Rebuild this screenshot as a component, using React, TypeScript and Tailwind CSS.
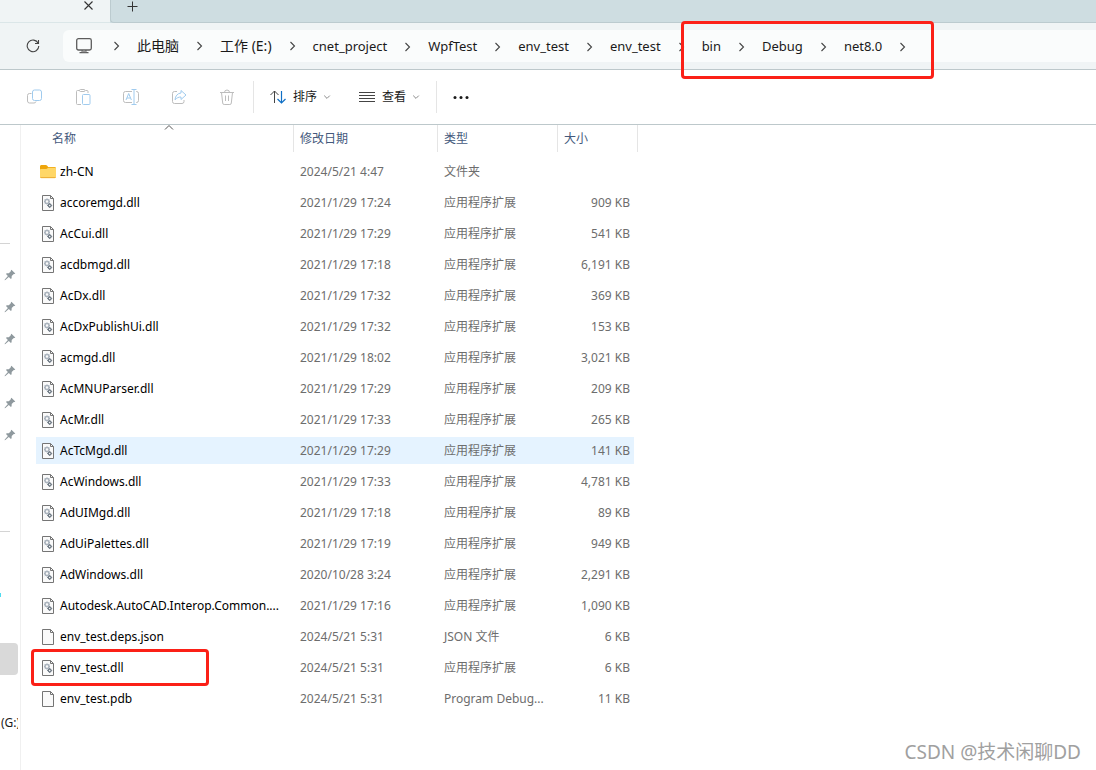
import type { ReactNode } from "react";

type FileKind = "folder" | "dll" | "plain";

interface FileRow {
  name: string;
  date: string;
  type: string;
  size: string;
  kind: FileKind;
}

const DLL = "应用程序扩展";

const files: FileRow[] = [
  { name: "zh-CN", date: "2024/5/21 4:47", type: "文件夹", size: "", kind: "folder" },
  { name: "accoremgd.dll", date: "2021/1/29 17:24", type: DLL, size: "909 KB", kind: "dll" },
  { name: "AcCui.dll", date: "2021/1/29 17:29", type: DLL, size: "541 KB", kind: "dll" },
  { name: "acdbmgd.dll", date: "2021/1/29 17:18", type: DLL, size: "6,191 KB", kind: "dll" },
  { name: "AcDx.dll", date: "2021/1/29 17:32", type: DLL, size: "369 KB", kind: "dll" },
  { name: "AcDxPublishUi.dll", date: "2021/1/29 17:32", type: DLL, size: "153 KB", kind: "dll" },
  { name: "acmgd.dll", date: "2021/1/29 18:02", type: DLL, size: "3,021 KB", kind: "dll" },
  { name: "AcMNUParser.dll", date: "2021/1/29 17:29", type: DLL, size: "209 KB", kind: "dll" },
  { name: "AcMr.dll", date: "2021/1/29 17:33", type: DLL, size: "265 KB", kind: "dll" },
  { name: "AcTcMgd.dll", date: "2021/1/29 17:29", type: DLL, size: "141 KB", kind: "dll" },
  { name: "AcWindows.dll", date: "2021/1/29 17:33", type: DLL, size: "4,781 KB", kind: "dll" },
  { name: "AdUIMgd.dll", date: "2021/1/29 17:18", type: DLL, size: "89 KB", kind: "dll" },
  { name: "AdUiPalettes.dll", date: "2021/1/29 17:19", type: DLL, size: "949 KB", kind: "dll" },
  { name: "AdWindows.dll", date: "2020/10/28 3:24", type: DLL, size: "2,291 KB", kind: "dll" },
  { name: "Autodesk.AutoCAD.Interop.Common....", date: "2021/1/29 17:16", type: DLL, size: "1,090 KB", kind: "dll" },
  { name: "env_test.deps.json", date: "2024/5/21 5:31", type: "JSON 文件", size: "6 KB", kind: "plain" },
  { name: "env_test.dll", date: "2024/5/21 5:31", type: DLL, size: "6 KB", kind: "dll" },
  { name: "env_test.pdb", date: "2024/5/21 5:31", type: "Program Debug...", size: "11 KB", kind: "plain" },
];

const HOVERED = "AcTcMgd.dll";

const crumbs = [
  { label: "此电脑", cjk: true },
  { label: "工作 (E:)", cjk: true },
  { label: "cnet_project" },
  { label: "WpfTest" },
  { label: "env_test" },
  { label: "env_test" },
  { label: "bin" },
  { label: "Debug" },
  { label: "net8.0" },
];

function Chevron() {
  return (
    <svg className="mx-4 h-2.5 w-[9px] shrink-0" viewBox="0 0 9 10" fill="none" stroke="#444" strokeWidth="1.1">
      <path d="M2.500 1 6.500 5l-4 4" />
    </svg>
  );
}

function SmallDown() {
  return (
    <svg className="h-2 w-2" viewBox="0 0 8 8" fill="none" stroke="#8a8a8a">
      <path d="M1.2 2.6 4 5.4l2.8-2.8" />
    </svg>
  );
}

function FileIcon({ kind }: { kind: FileKind }) {
  if (kind === "folder") {
    return (
      <svg className="h-4 w-4 shrink-0" viewBox="0 0 16 16">
        <path d="M0 2.700C0 1.800.6 1.100 1.500 1.100h4.300c.5 0 .9.2 1.200.500l1.200 1.300h6.400c.8 0 1.400.6 1.400 1.400V7H0z" fill="#eea50b" />
        <path d="M0 6c0-.6.4-1 1-1h5.200c.4 0 .7-.1 1-.4l.6-.6c.2-.2.500-.3.8-.3H15c.6 0 1 .4 1 1v8.300c0 .6-.6 1.200-1.200 1.200H1.200C.6 14.200 0 13.600 0 13z" fill="#ffd767" />
        <path d="M.2 13.200h15.600c-.2.500-.6.900-1.200.900H1.400c-.6 0-1-.4-1.200-.900z" fill="#eaa52a" />
      </svg>
    );
  }
  return (
    <svg className="h-4 w-4 shrink-0" viewBox="0 0 16 16" fill="none">
      <path d="M2.500.500h8l3 3v12h-11z" fill="#fafafa" stroke="#757575" />
      <path d="M10.500.500v3h3" stroke="#757575" />
      {kind === "dll" && (
        <>
          <circle cx="7" cy="6.500" r="2" stroke="#a9b2bc" strokeWidth="1.500" />
          <path d="M7 3.500v1M7 8.500v1M4 6.500h1M9 6.500h1M4.800 4.300l.7.700M9.200 4.300l-.7.700M4.800 8.700l.7-.7" stroke="#a9b2bc" />
          <circle cx="9.700" cy="10.500" r="1.400" stroke="#707b86" strokeWidth="1.300" />
          <path d="M9.700 8v1M9.700 12v1M7.200 10.500h1M11.200 10.500h1" stroke="#707b86" />
        </>
      )}
    </svg>
  );
}

function Pin() {
  return (
    <svg className="h-3 w-3" viewBox="0 0 12 12" fill="#8f999e">
      <path d="M7.400.700 11.300 4.400 10.500 5.100 9.800 5 7.700 7.100 7.600 9.200 6.900 9.900 4.800 7.900 1.400 11 .6 11.200.8 10.400 3.900 7 2 5 2.700 4.300 4.900 4.200 7 2.100 6.800 1.400z" />
    </svg>
  );
}

function ToolButton({ label, children }: { label: string; children: ReactNode }) {
  return (
    <button aria-label={label} className="flex h-8 w-8 items-center justify-center rounded">
      <svg className="h-4 w-4" viewBox="0 0 16 16" fill="none" stroke="#bdbdbd" strokeLinejoin="round">
        {children}
      </svg>
    </button>
  );
}

function TabStrip() {
  return (
    <div className="flex h-[23px] bg-[#cedde1]">
      <div className="flex w-[110px] justify-end border-b border-[#dbe6e8] bg-[#f0f4f5] pr-4">
        <button aria-label="关闭标签页" className="flex h-3 w-3 items-center justify-center">
          <svg className="h-3 w-3" viewBox="0 0 12 12" fill="none" stroke="#333" strokeWidth="1.100">
            <path d="M2.500 1.500l8 8M10.500 1.500l-8 8" />
          </svg>
        </button>
      </div>
      <div className="flex flex-1 rounded-bl border-b border-l border-[#bccbcf] pl-4">
        <button aria-label="新建标签页" className="flex h-3 w-3 items-center justify-center">
          <svg className="h-3 w-3" viewBox="0 0 12 12" fill="none" stroke="#333">
            <path d="M.500 6.500h10M5.500 1.500v10" />
          </svg>
        </button>
      </div>
    </div>
  );
}

function AddressBar() {
  return (
    <div className="flex h-[47px] items-center border-b border-[#bdc8cb] bg-[#f0f4f5]">
      <button aria-label="刷新" className="flex w-[63px] items-center pl-[26px]">
        <svg className="h-3.5 w-3.5" viewBox="0 0 14 14" fill="none" stroke="#444" strokeWidth="1.100">
          <path d="M12.200 4.300A5.800 5.800 0 1 0 12.800 7" />
          <path d="M12.500 1v3.500H9" />
        </svg>
      </button>
      <nav aria-label="地址" className="flex h-8 flex-1 items-center rounded-l-md bg-[#fafcfc] pl-[13px]">
        <svg className="h-4 w-4 shrink-0" viewBox="0 0 16 16" fill="none" stroke="#5c5c5c" strokeWidth="1.300">
          <rect x=".700" y=".700" width="14.600" height="11.300" rx="1.800" />
          <path d="M6.200 12v3M9.800 12v3M3.500 14.600h9" />
          <path d="M6 13.500h4" stroke="#999" />
        </svg>
        <span className="ml-1 flex">
          <Chevron />
        </span>
        <ol className="flex items-baseline">
          {crumbs.map((c, i) => (
            <li key={i} className="flex items-center">
              <button className={c.cjk ? "whitespace-nowrap text-sm" : "whitespace-nowrap text-[13px]"}>
                {c.label}
              </button>
              <Chevron />
            </li>
          ))}
        </ol>
      </nav>
    </div>
  );
}

function Toolbar() {
  return (
    <div className="flex h-[55px] items-center border-b border-[#bdc8cb] pl-[19px]">
      <div className="flex gap-4">
        <ToolButton label="复制">
          <path d="M4.500 4.500h-2a2 2 0 0 0-2 2v5.500a2 2 0 0 0 2 2h4.500a2 2 0 0 0 2-1.500" />
          <rect x="5.500" y="1" width="9" height="10.500" rx="2" stroke="#a0cbee" />
        </ToolButton>
        <ToolButton label="粘贴">
          <path d="M6 15.500H2.500a1 1 0 0 1-1-1v-12a1 1 0 0 1 1-1h2M10.500 1.500h1.500a1 1 0 0 1 1 1V4" />
          <rect x="4.500" y=".500" width="5.500" height="2" rx="1" />
          <rect x="7.500" y="5.500" width="7.500" height="10" rx="1" stroke="#a0cbee" />
        </ToolButton>
        <ToolButton label="重命名">
          <path d="M9 2.500H2.500a2 2 0 0 0-2 2v7a2 2 0 0 0 2 2H9M13 2.500h.500a2 2 0 0 1 2 2v7a2 2 0 0 1-2 2H13" />
          <path d="M3 11l2.700-6.500L8.400 11M4 9h3.500M8.500.500h5M11 .500v15M8.500 15.500h5" stroke="#a0cbee" />
        </ToolButton>
        <ToolButton label="共享">
          <path d="M6 2.500H3.500a2 2 0 0 0-2 2v8a2 2 0 0 0 2 2H11a2 2 0 0 0 2-2V11" />
          <path d="M10 1.500 15 6l-5 4.500V8C7.500 8 5.800 8.800 4 10.800 4.300 7 6.500 4.300 10 4z" stroke="#a0cbee" />
        </ToolButton>
        <ToolButton label="删除">
          <path d="M1 3.500h14M5.500 3.500a2.500 2.500 0 0 1 5 0M2.500 3.500l1.200 10.500a1.500 1.500 0 0 0 1.500 1.500h5.600a1.500 1.500 0 0 0 1.500-1.500l1.200-10.500M6.500 6.500v5.500M9.500 6.500v5.500" />
        </ToolButton>
      </div>
      <div className="ml-2.5 h-8 w-px bg-[#e5e5e5]" />
      <button className="ml-4 flex items-center text-xs">
        <svg className="mr-[7px] h-4 w-4" viewBox="0 0 16 16" fill="none">
          <path d="M4.500 14V2M.500 6l4-4 4 4" stroke="#444" />
          <path d="M11.500 2v12M7.500 10l4 4 4-4" stroke="#0f6fc5" strokeWidth="1.200" />
        </svg>
        排序
        <span className="ml-1.5">
          <SmallDown />
        </span>
      </button>
      <button className="ml-7 flex items-center text-xs">
        <svg className="mr-[7px] h-4 w-4" viewBox="0 0 16 16" fill="none" stroke="#444">
          <path d="M0 3.500h16M0 6.500h16M0 9.500h16M0 12.500h16" />
        </svg>
        查看
        <span className="ml-1.5">
          <SmallDown />
        </span>
      </button>
      <div className="ml-4 h-8 w-px bg-[#e5e5e5]" />
      <button aria-label="查看更多" className="ml-4 flex items-center">
        <svg className="h-4 w-4" viewBox="0 0 16 16" fill="#1a1a1a">
          <circle cx="2" cy="8.500" r="1.500" />
          <circle cx="8" cy="8.500" r="1.500" />
          <circle cx="14" cy="8.500" r="1.500" />
        </svg>
      </button>
    </div>
  );
}

function Sidebar() {
  return (
    <aside className="w-[21px] shrink-0 overflow-hidden border-r border-[#f0f0f0] text-xs">
      <div className="mb-[15px] h-[119px] w-2.5 border-b border-[#d4d4d4]" />
      {[0, 1, 2, 3, 4, 5].map((n) => (
        <div key={n} className="flex h-8 items-center pl-1">
          <Pin />
        </div>
      ))}
      <div className="mb-[15px] h-[81px] w-2.5 border-b border-[#d4d4d4]" />
      <div className="h-8" />
      <div className="flex h-8 items-center">
        <div className="h-1 w-px bg-[#4fdcf0]" />
      </div>
      <div className="h-8" />
      <div className="h-8 w-[18px] rounded-r-sm bg-[#d9d9d9]" />
      <div className="h-8" />
      <div className="flex h-8 w-[18px] items-center overflow-hidden whitespace-nowrap pl-px">(G:)</div>
    </aside>
  );
}

function FileTable() {
  const head = "h-[27px] border-r border-[#e5e5e5] p-0 text-left font-normal";

  return (
    <table className="w-[602px] table-fixed border-separate border-spacing-0 text-xs">
      <colgroup>
        <col className="w-[258px]" />
        <col className="w-36" />
        <col className="w-[120px]" />
        <col className="w-20" />
      </colgroup>
      <thead className="text-[#44597c]">
        <tr>
          <th className={head}>
            <button className="relative block w-full pl-4 text-left">
              名称
              <svg className="absolute -top-[7px] left-[128px] h-2 w-2.5" viewBox="0 0 10 8" fill="none" stroke="#555">
                <path d="M1 5.500l4-4 4 4" />
              </svg>
            </button>
          </th>
          <th className={head}>
            <button className="pl-1.5">修改日期</button>
          </th>
          <th className={head}>
            <button className="pl-1.5">类型</button>
          </th>
          <th className={head}>
            <button className="pl-1.5">大小</button>
          </th>
        </tr>
      </thead>
      <tbody className="text-[#6d6d6d]">
        <tr className="h-1" aria-hidden="true" />
        {files.map((f) => {
          const cell = f.name === HOVERED ? "flex h-[27px] items-center bg-[#e5f3ff]" : "flex h-[27px] items-center";
          return (
            <tr key={f.name} className="h-[31px]">
              <td className="p-0">
                <div className={cell + " pl-1 text-black"}>
                  <FileIcon kind={f.kind} />
                  <span className="ml-1 whitespace-nowrap">{f.name}</span>
                </div>
              </td>
              <td className="p-0">
                <div className={cell + " pl-1.5"}>{f.date}</div>
              </td>
              <td className="p-0">
                <div className={cell + " whitespace-nowrap pl-1.5"}>{f.type}</div>
              </td>
              <td className="p-0">
                <div className={cell + " mr-1 justify-end pr-1"}>{f.size}</div>
              </td>
            </tr>
          );
        })}
      </tbody>
    </table>
  );
}

export default function App() {
  return (
    <div className="relative flex min-h-screen flex-col overflow-hidden bg-white font-['Noto_Sans','Noto_Sans_CJK_SC',sans-serif] text-[#1a1a1a]">
      <TabStrip />
      <AddressBar />
      <Toolbar />
      <div className="flex flex-1">
        <Sidebar />
        <main className="flex-1 pl-[15px]">
          <FileTable />
        </main>
      </div>

      {/* red marker frames */}
      <div className="pointer-events-none absolute left-[681px] top-[21px] h-[58px] w-[253px] rounded border-3 border-[#fb2017]" />
      <div className="pointer-events-none absolute left-[31px] top-[649px] h-[37px] w-[178px] rounded border-3 border-[#fb2017]" />

      <div className="absolute bottom-1.5 right-[15px] text-[19px] leading-6 text-[#a0a0a0]">
        CSDN @技术闲聊DD
      </div>
    </div>
  );
}
